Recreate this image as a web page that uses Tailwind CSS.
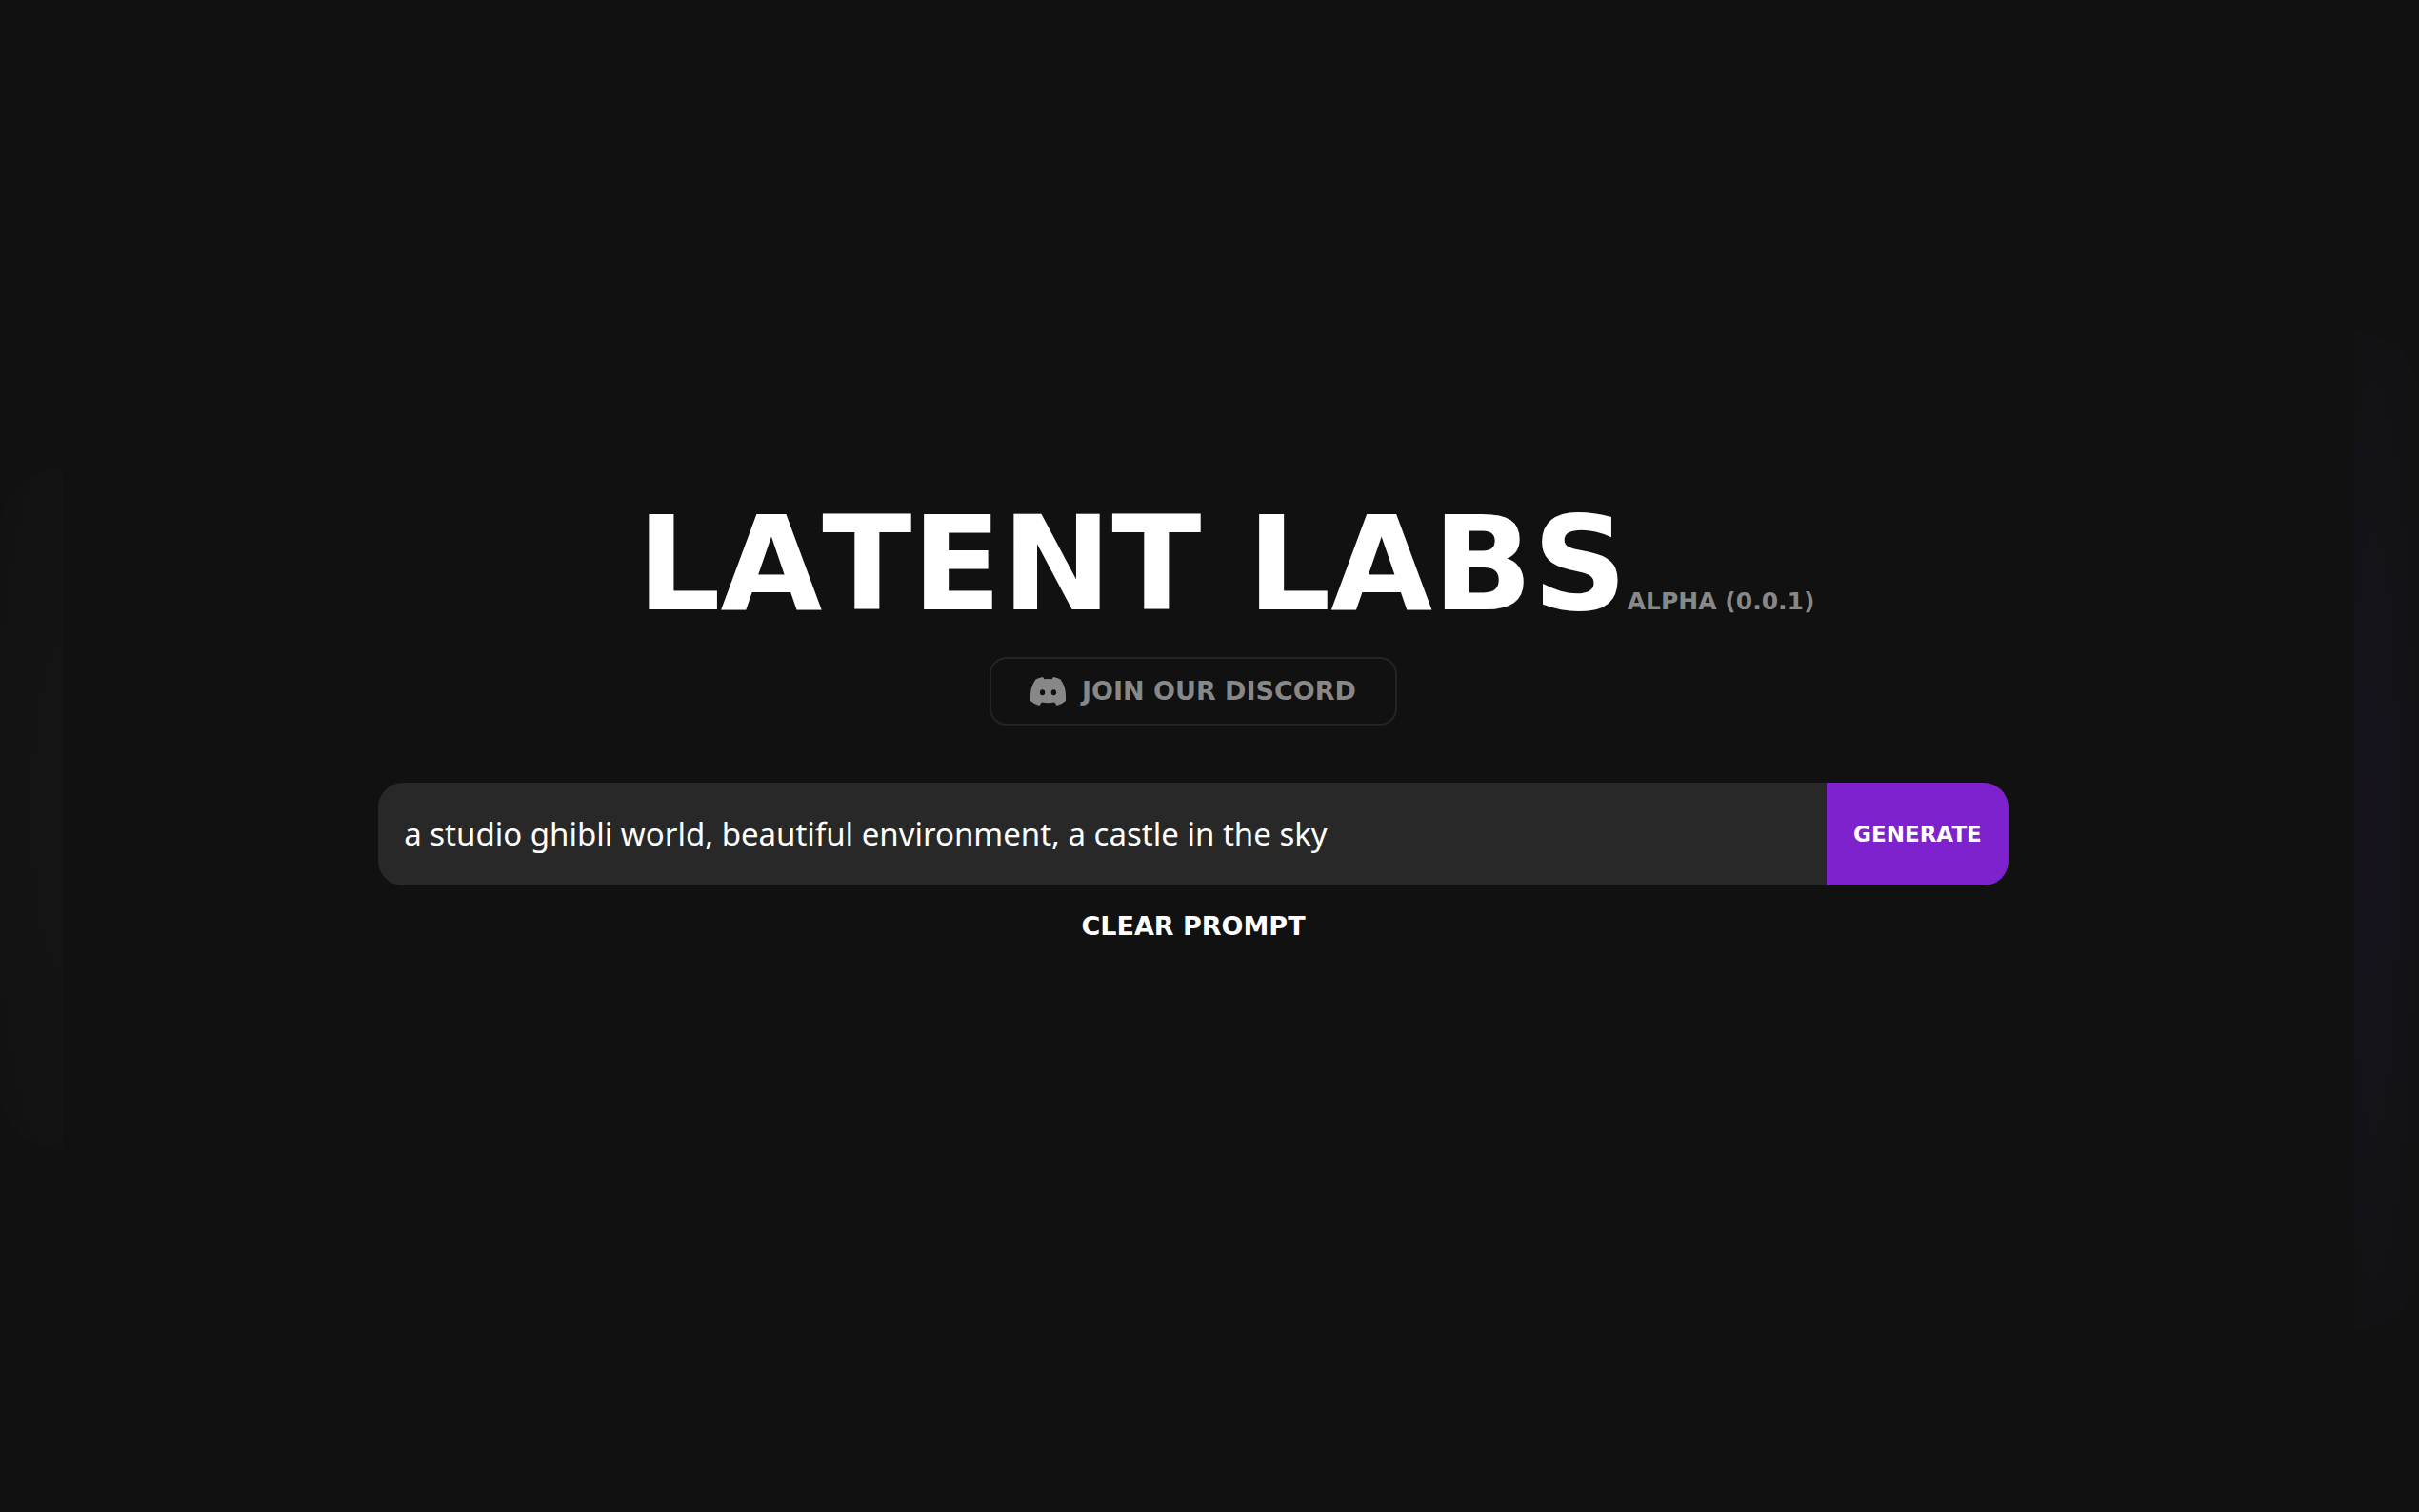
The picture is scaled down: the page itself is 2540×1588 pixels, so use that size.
<!DOCTYPE html>
<html lang="en">
<head>
  <meta charset="UTF-8" />
  <meta name="viewport" content="width=device-width, initial-scale=1.0" />
  <title>Latent Labs</title>
  <script src="https://cdn.jsdelivr.net/npm/@tailwindcss/browser@4"></script>
</head>
<body class="bg-[#111111] text-white font-['DejaVu_Sans',sans-serif]">
  <div class="relative min-h-screen overflow-hidden flex flex-col items-center justify-center pb-[75px] pr-[34px]">

    <!-- faint glows at both edges -->
    <div class="absolute left-0 top-[31%] h-[45%] w-[66px] rounded-l-full bg-radial-[at_100%_50%] from-[#151515] to-[#121212]"></div>
    <div class="absolute right-0 top-[22%] h-[66%] w-[68px] rounded-r-full bg-radial-[at_30%_50%] from-[#17131e] via-[#131317] to-[#121212]"></div>

    <header class="relative flex items-baseline pl-[68px] font-bold">
      <h1 class="text-[138px] leading-[136px] whitespace-nowrap [font-kerning:none]">LATENT LABS</h1>
      <span class="text-[25px] leading-none text-[#888888] whitespace-nowrap">ALPHA (0.0.1)</span>
    </header>

    <a href="#" class="relative mt-[29px] flex h-[72px] items-center gap-[17px] rounded-[18px] border-2 border-[#242424] px-[41px] text-[27px] leading-8 font-bold text-[#888888] whitespace-nowrap">
      <svg class="w-[37px] h-[30px]" viewBox="0 0 37 30" fill="currentColor" aria-hidden="true">
        <path fill-rule="evenodd" d="M13 0 14.5 2.2Q18.5 1.6 22.5 2.2L24 0Q28 .6 31.5 2.6Q37 10.5 37 19.500V25Q33.500 28.500 27.500 30L25.300 26.500Q18.500 27.800 11.700 26.500L9.500 30Q3.500 28.500 0 25V19.500Q0 10.500 5.500 2.600Q9 .6 13 0ZM12.600 13.200a2.700 3 0 1 0 0 6a2.700 3 0 1 0 0-6ZM24.400 13.200a2.700 3 0 1 0 0 6a2.700 3 0 1 0 0-6Z" />
      </svg>
      JOIN OUR DISCORD
    </a>

    <form class="relative mt-[60px] flex h-[108px] w-[68.3%] overflow-hidden rounded-[26px]" onsubmit="return false">
      <input id="prompt" type="text" aria-label="Prompt" value="a studio ghibli world, beautiful environment, a castle in the sky" class="min-w-0 flex-1 bg-[#282828] px-[27px] text-[33px] font-['Noto_Sans',sans-serif] outline-none" />
      <button type="submit" class="bg-[#7e22ce] px-7 text-[23px] leading-8 font-bold">GENERATE</button>
    </form>

    <button type="button" id="clear" class="relative mt-[27px] text-[27px] leading-8 font-bold">CLEAR PROMPT</button>
  </div>

  <script>
    const prompt = document.getElementById('prompt');
    document.getElementById('clear').onclick = () => {
      prompt.value = '';
      prompt.focus();
    };
  </script>
</body>
</html>
